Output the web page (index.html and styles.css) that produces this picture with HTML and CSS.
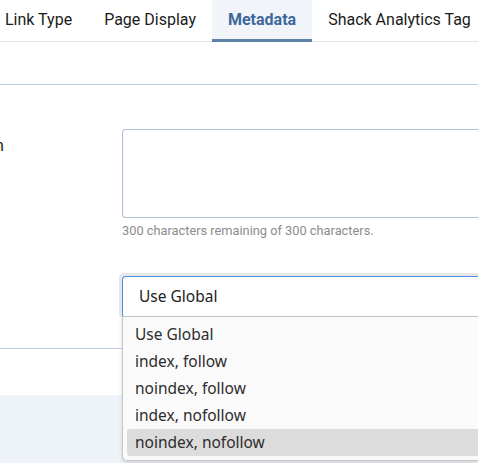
FILE: index.html
```html
<!DOCTYPE html>
<html lang="en">
<head>
<meta charset="utf-8">
<title>Metadata</title>
<link rel="stylesheet" href="styles.css">
</head>
<body>
<div class="page">
  <nav class="tabs">
    <div class="tab">Link Type</div>
    <div class="tab">Page Display</div>
    <div class="tab active">Metadata</div>
    <div class="tab">Shack Analytics Tag</div>
  </nav>
  <div class="spacer"></div>
  <section class="card">
    <div class="row">
      <div class="label"><span class="label-text">n</span></div>
      <div class="control">
        <div class="textarea"></div>
        <div class="hint">300 characters remaining of 300 characters.</div>
      </div>
    </div>
    <div class="row row-select">
      <div class="label"></div>
      <div class="control">
        <div class="select-wrap">
          <div class="select">Use Global</div>
          <ul class="dropdown">
            <li>Use Global</li>
            <li>index, follow</li>
            <li>noindex, follow</li>
            <li>index, nofollow</li>
            <li class="hl">noindex, nofollow</li>
          </ul>
        </div>
      </div>
    </div>
  </section>
  <div class="after"></div>
  <div class="footer-bg"></div>
</div>
</body>
</html>
```
FILE: styles.css
```css
html, body {
  margin: 0;
  padding: 0;
  background: #ffffff;
  overflow: hidden;
}
body {
  font-family: Roboto, "Liberation Sans", sans-serif;
  color: #1d1d1d;
  width: 478px;
  height: 463px;
}
.page {
  display: flex;
  flex-direction: column;
  width: 478px;
  height: 463px;
  overflow: hidden;
}
.tabs {
  display: flex;
  height: 41px;
  border-bottom: 1px solid #dfe3e8;
  margin-left: -11px;
  flex: none;
}
.tab {
  display: flex;
  align-items: center;
  padding: 0 16px 1px;
  font-size: 16px;
  white-space: nowrap;
  color: #1b1b1b;
  border-bottom: 3px solid transparent;
  margin-bottom: -1px;
  box-sizing: border-box;
  height: 42px;
}
.tab.active {
  background: #f1f5f9;
  color: #3e679c;
  font-weight: 700;
  border-bottom-color: #5f82a9;
}
.spacer {
  height: 42px;
  border-bottom: 1px solid #bccde2;
  flex: none;
}
.card {
  padding-top: 44px;
  border-bottom: 1px solid #bccde2;
  flex: none;
  height: 219px;
  box-sizing: content-box;
}
.row {
  display: flex;
}
.label {
  width: 122px;
  flex: none;
  font-size: 16px;
  padding-top: 7px;
  overflow: hidden;
}
.label-text {
  display: inline-block;
  margin-left: -5px;
}
.control {
  flex: 1;
  min-width: 0;
}
.textarea {
  height: 87px;
  border: 1px solid #adbfd9;
  border-right: none;
  border-radius: 4px 0 0 4px;
  background: #fff;
}
.hint {
  font-size: 12.8px;
  color: #8c8c8c;
  margin-top: 5px;
}
.row-select {
  margin-top: 38px;
}
.select-wrap {
  position: relative;
}
.select {
  box-sizing: border-box;
  height: 42px;
  border: 1px solid #4a90df;
  border-right: none;
  border-radius: 4px 0 0 4px;
  box-shadow: -3px 0 0 0 #e6e6e6, 0 -3px 0 0 #e6e6e6, -2px -2px 0 1px #e6e6e6;
  padding-left: 16px;
  padding-bottom: 3px;
  display: flex;
  align-items: center;
  font-family: "Noto Sans", "Open Sans", sans-serif;
  font-size: 15.5px;
  color: #222;
  background: #fff;
}
.dropdown {
  position: absolute;
  left: 0;
  right: 0;
  top: 40px;
  margin: 0;
  padding: 4px 0 4px 4px;
  list-style: none;
  background: #fafafa;
  border: 1px solid #c6c6c6;
  border-right: none;
  border-radius: 0 0 0 5px;
  box-shadow: 0 2px 4px rgba(0,0,0,0.12);
  z-index: 2;
  font-family: "Noto Sans", "Open Sans", sans-serif;
  font-size: 15.5px;
  color: #2d2d2d;
}
.dropdown li {
  height: 27px;
  line-height: 26px;
  padding-left: 8px;
  border-radius: 3px 0 0 3px;
}
.dropdown li.hl {
  background: #dcdcdc;
}
.after {
  height: 46px;
  flex: none;
}
.footer-bg {
  flex: 1;
  background: #eef2f9;
}
```
